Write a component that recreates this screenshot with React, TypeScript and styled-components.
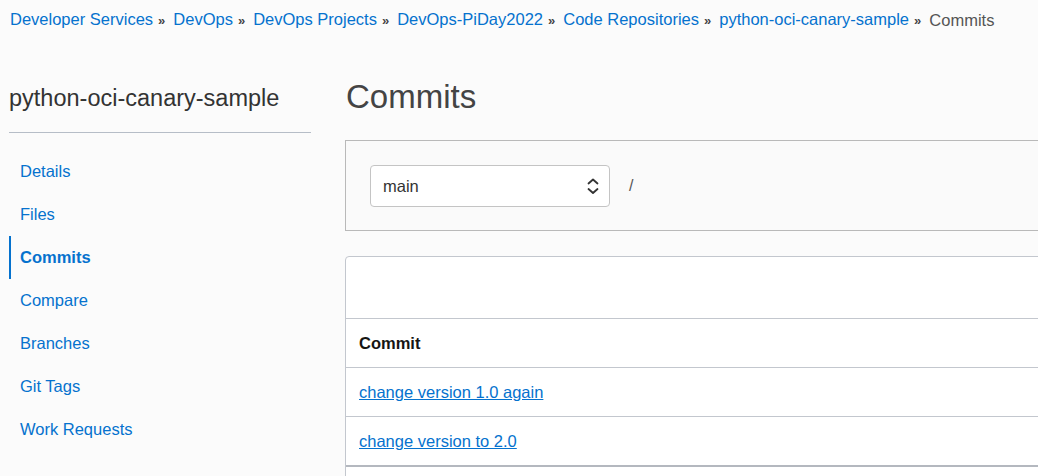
import { FC } from 'react';
import styled, { createGlobalStyle } from 'styled-components';

const blue = '#0572ce';
const line = '#c3c7ce';

const GlobalStyle = createGlobalStyle`
  html, body {
    margin: 0;
    padding: 0;
    background: #fbfbfb;
    overflow: hidden;
  }
  body {
    font-family: 'Liberation Sans', Arial, sans-serif;
    color: #333;
  }
`;

const Page = styled.div`
  width: 1038px;
  height: 476px;
  overflow: hidden;
  padding: 9px 0 0 9px;
  box-sizing: border-box;
`;

const Crumbs = styled.nav`
  display: flex;
  align-items: center;
  white-space: nowrap;
  font-size: 16.5px;
  line-height: 20px;
  padding-left: 1px;
`;

const CrumbLink = styled.a`
  color: ${blue};
  text-decoration: none;
`;

const CrumbCurrent = styled.span`
  color: #555;
`;

const CrumbSep = styled.span`
  color: #444;
  font-size: 13px;
  font-weight: bold;
  margin: 0 8px 0 5px;
`;

const Layout = styled.div`
  display: grid;
  grid-template-columns: 302px 900px;
  column-gap: 34px;
  align-items: start;
  margin-top: 33px;
`;

const Sidebar = styled.aside`
  display: flex;
  flex-direction: column;
`;

const SideTitle = styled.h2`
  margin: 20px 0 0;
  padding-bottom: 20px;
  border-bottom: 1px solid #b6bdc7;
  font-size: 23.5px;
  line-height: 28px;
  font-weight: normal;
  color: #333;
`;

const NavList = styled.ul`
  list-style: none;
  margin: 17px 0 0;
  padding: 0;
`;

const NavItem = styled.li<{ $active?: boolean }>`
  height: 43px;
  display: flex;
  align-items: center;
  padding-left: 9px;
  border-left: 2px solid ${p => (p.$active ? blue : 'transparent')};
  font-size: 16.5px;
  font-weight: ${p => (p.$active ? 'bold' : 'normal')};
  color: ${blue};
`;

const Main = styled.main`
  display: flex;
  flex-direction: column;
`;

const Heading = styled.h1`
  margin: 13px 0 0 1px;
  font-size: 33px;
  line-height: 40px;
  font-weight: normal;
  color: #444;
`;

const FilterBox = styled.section`
  margin-top: 23px;
  border: 1px solid #b9b9b9;
  background: #fafafa;
  padding: 24px 24px 23px;
  display: flex;
  align-items: center;
  gap: 19px;
`;

const SelectWrap = styled.div`
  position: relative;
  width: 240px;
  height: 42px;
  box-sizing: border-box;
  border: 1px solid #c4c4c4;
  border-radius: 4px;
  background: #fff;
  display: flex;
  align-items: center;
  padding-left: 12px;
  font-size: 16.5px;
  color: #333;

  > svg {
    position: absolute;
    right: 8px;
    top: 10px;
  }
`;

const PathSep = styled.span`
  font-size: 16px;
  color: #555;
`;

const TableCard = styled.section`
  margin-top: 25px;
  border: 1px solid ${line};
  border-top-left-radius: 4px;
  background: #fff;
  height: 260px;
`;

const Toolbar = styled.div`
  height: 61px;
  border-bottom: 1px solid ${line};
`;

const Row = styled.div<{ $head?: boolean; $last?: boolean }>`
  height: 48px;
  display: flex;
  align-items: center;
  padding-left: 13px;
  border-bottom: ${p => (p.$last ? `2px solid #b4b8bf` : `1px solid ${line}`)};
  font-size: 16.5px;
  font-weight: ${p => (p.$head ? 'bold' : 'normal')};
  color: #161513;
`;

const CommitLink = styled.a`
  color: ${blue};
  text-decoration: underline;
`;

const UpDown: FC = () => (
  <svg width='16' height='20' viewBox='0 0 16 20' fill='none'>
    <path d='M3.5 7.5L8 3.5L12.5 7.5' stroke='#333' strokeWidth='1.8' strokeLinecap='round' strokeLinejoin='round' />
    <path d='M3.5 13L8 17L12.5 13' stroke='#333' strokeWidth='1.8' strokeLinecap='round' strokeLinejoin='round' />
  </svg>
);

const crumbs = [
  'Developer Services',
  'DevOps',
  'DevOps Projects',
  'DevOps-PiDay2022',
  'Code Repositories',
  'python-oci-canary-sample',
];

const navItems = ['Details', 'Files', 'Commits', 'Compare', 'Branches', 'Git Tags', 'Work Requests'];

const commits = ['change version 1.0 again', 'change version to 2.0'];

export default function App() {
  return (
    <>
      <GlobalStyle />
      <Page>
        <Crumbs>
          {crumbs.map(c => (
            <span key={c}>
              <CrumbLink href='#'>{c}</CrumbLink>
              <CrumbSep>»</CrumbSep>
            </span>
          ))}
          <CrumbCurrent>Commits</CrumbCurrent>
        </Crumbs>
        <Layout>
          <Sidebar>
            <SideTitle>python-oci-canary-sample</SideTitle>
            <NavList>
              {navItems.map(n => (
                <NavItem key={n} $active={n === 'Commits'}>
                  {n}
                </NavItem>
              ))}
            </NavList>
          </Sidebar>
          <Main>
            <Heading>Commits</Heading>
            <FilterBox>
              <SelectWrap>
                main
                <UpDown />
              </SelectWrap>
              <PathSep>/</PathSep>
            </FilterBox>
            <TableCard>
              <Toolbar />
              <Row $head>Commit</Row>
              {commits.map((c, i) => (
                <Row key={c} $last={i === commits.length - 1}>
                  <CommitLink href='#'>{c}</CommitLink>
                </Row>
              ))}
            </TableCard>
          </Main>
        </Layout>
      </Page>
    </>
  );
}
